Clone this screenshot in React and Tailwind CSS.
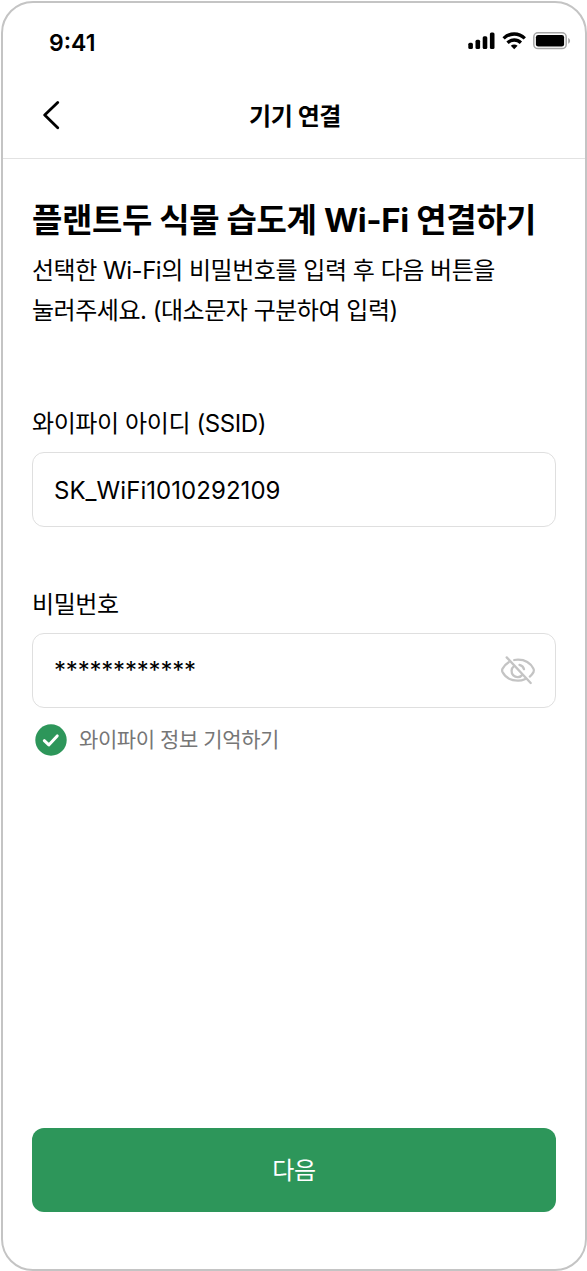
import React, { useState } from 'react';

const SignalIcon = () => (
    <svg width="28" height="18" viewBox="0 0 28 18" fill="black">
        <rect x="0.3" y="10.8" width="4.6" height="6.2" rx="1.5" />
        <rect x="7.5" y="7.8" width="4.6" height="9.2" rx="1.5" />
        <rect x="14.7" y="4.2" width="4.6" height="12.8" rx="1.5" />
        <rect x="21.9" y="0.6" width="4.6" height="16.4" rx="1.5" />
    </svg>
);

const WifiIcon = () => (
    <svg width="25" height="18" viewBox="0 0 25 18" fill="none" stroke="black" strokeWidth="3.3">
        <path d="M1.6 6.4C4.6 3.5 8.4 2 12.2 2s7.6 1.5 10.6 4.4" />
        <path d="M5.5 10.8C7.4 9 9.7 8 12.2 8s4.800 1 6.700 2.800" />
        <path d="M12.2 17.2l3.4-3.4c-2-1.7-4.8-1.7-6.8 0z" fill="black" stroke="none" />
    </svg>
);

const BatteryIcon = () => (
    <svg width="38" height="18" viewBox="0 0 38 18">
        <rect x="0.8" y="0.8" width="32.4" height="15.8" rx="4.2" fill="none" stroke="#a6a6a6" strokeWidth="1.5" />
        <rect x="2.9" y="2.9" width="28.2" height="11.6" rx="2.3" fill="black" />
        <path d="M35.2 5.9v5.8c1.2-.5 1.9-1.6 1.9-2.9s-.7-2.4-1.9-2.9z" fill="#a6a6a6" />
    </svg>
);

const BackIcon = () => (
    <svg width="18" height="30" viewBox="0 0 18 30" fill="none" stroke="black" strokeWidth="2.8" strokeLinecap="round" strokeLinejoin="round">
        <path d="M15.7 1.5L2.7 14.1l13 12.6" />
    </svg>
);

const EyeOffIcon = () => (
    <svg width="36" height="30" viewBox="0 0 36 30" fill="none" stroke="#c4c4c4" strokeWidth="2.3" strokeLinecap="round">
        <path d="M14.2 4c1.2-.3 2.5-.4 3.8-.4 7.5 0 13 4.3 15.5 9.2.6 1.1.6 2.2 0 3.3-.9 1.700-2.100 3.200-3.700 4.500" />
        <path d="M8.7 6.2c-2.700 1.600-4.900 3.900-6.200 6.600-.5 1.100-.5 2.200 0 3.300C5 21 10.500 24.700 18 24.700c2.500 0 4.800-.5 6.800-1.400" />
        <path d="M14 10.200a6.100 6.100 0 1 0 8.500 8.600" />
        <path d="M19.500 8.800c2.200.6 3.900 2.200 4.500 4.400" />
        <path d="M6.700 1.400l24 25.600" />
    </svg>
);

const CheckIcon = () => (
    <svg width="32" height="32" viewBox="0 0 32 32" fill="none">
        <circle cx="16" cy="16" r="15.7" fill="#2d965a" />
        <path d="M9.3 16.7l4.5 4.2 8.4-9" stroke="white" strokeWidth="3" strokeLinecap="round" strokeLinejoin="round" />
    </svg>
);

const App = () => {
    const [ssid, setSsid] = useState('SK_WiFi1010292109');
    const [password, setPassword] = useState('************');

    return (
        <div className="w-[587px] h-[1271px] pt-px pl-px bg-white font-['Inter','Noto_Sans_CJK_KR',sans-serif] text-black">
            <div className="flex flex-col h-full border-2 border-[#c4c4c4] rounded-[32px]">
                <div className="flex justify-between h-[76px] pl-[46px] pr-[14px] pt-[24px]">
                    <span className="text-[23px] leading-[32px] font-semibold">9:41</span>
                    <div className="flex gap-[6px] pt-[5px]">
                        <SignalIcon />
                        <WifiIcon />
                        <BatteryIcon />
                    </div>
                </div>
                <header className="grid grid-cols-3 items-center h-[80px] pl-[39px] pr-[37px] pb-[6px] border-b border-[#e2e2e2]">
                    <button type="button" aria-label="뒤로">
                        <BackIcon />
                    </button>
                    <h1 className="justify-self-center pt-[2px] text-[24px] leading-[32px] tracking-[-0.5px] font-semibold whitespace-nowrap">기기 연결</h1>
                </header>
                <main className="flex flex-col grow px-[29px] pt-[39px]">
                    <h2 className="text-[33px] leading-[44px] tracking-[-0.4px] font-bold whitespace-nowrap">플랜트두 식물 습도계 Wi-Fi 연결하기</h2>
                    <p className="mt-[9px] text-[24px] leading-[40px] tracking-[-0.48px] whitespace-nowrap">
                        선택한 Wi-Fi의 비밀번호를 입력 후 다음 버튼을
                        <br />
                        눌러주세요. (대소문자 구분하여 입력)
                    </p>
                    <label className="mt-[75px] text-[24px] leading-[36px] tracking-[-0.4px]" htmlFor="ssid">와이파이 아이디 (SSID)</label>
                    <input
                        id="ssid"
                        type="text"
                        value={ssid}
                        onChange={(e) => setSsid(e.target.value)}
                        className="mt-[10px] h-[75px] px-[21px] pt-[2px] text-[24px] tracking-[0.05px] border border-[#dfdfdf] rounded-[12px] focus:outline-none"
                    />
                    <label className="mt-[60px] text-[24px] leading-[36px] tracking-[-0.4px]" htmlFor="password">비밀번호</label>
                    <div className="flex items-center mt-[10px] h-[75px] px-[19px] border border-[#dfdfdf] rounded-[12px]">
                        <input
                            id="password"
                            type="text"
                            value={password}
                            onChange={(e) => setPassword(e.target.value)}
                            className="grow min-w-0 pl-[2px] text-[24px] tracking-[-0.2px] focus:outline-none"
                        />
                        <EyeOffIcon />
                    </div>
                    <div className="flex items-center gap-[12px] mt-[15px] pl-[3px]">
                        <CheckIcon />
                        <span className="pt-px text-[21px] leading-[32px] tracking-[-0.42px] text-[#767676]">와이파이 정보 기억하기</span>
                    </div>
                    <button type="button" className="mt-auto mb-[57px] h-[84px] pt-[2px] rounded-[12px] bg-[#2d965a] text-[24px] tracking-[-0.4px] text-white">
                        다음
                    </button>
                </main>
            </div>
        </div>
    );
};

export default App;
